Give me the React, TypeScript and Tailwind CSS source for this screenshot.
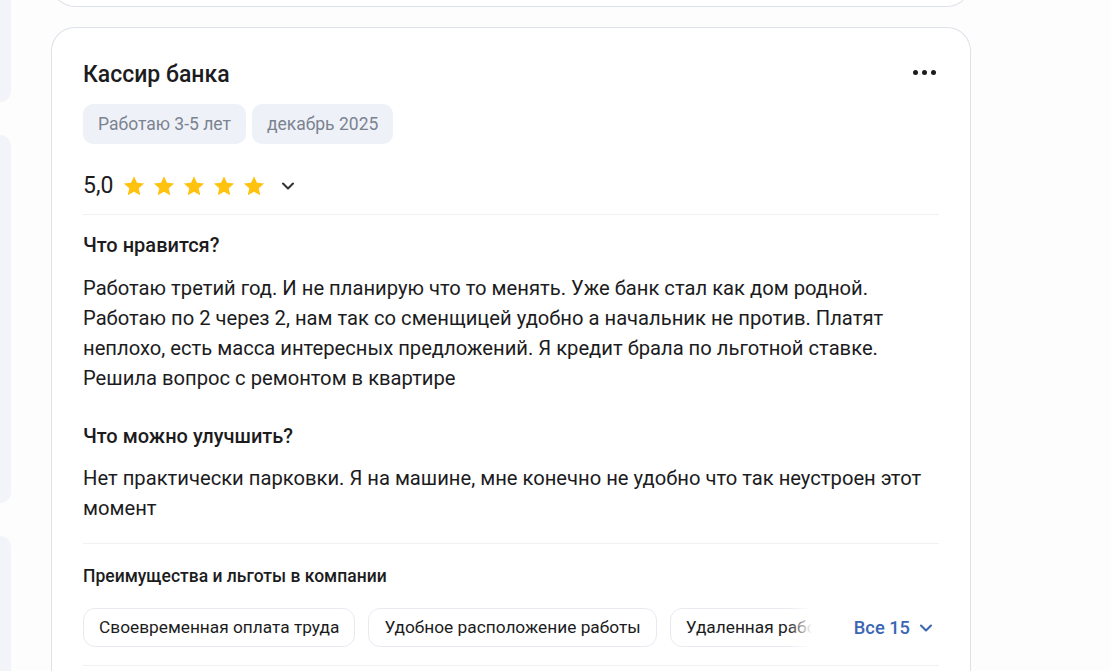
import { ChevronDown } from 'lucide-react'

const font = { fontFamily: 'Roboto, "Noto Sans", sans-serif' }

function Star() {
  return (
    <svg width="24" height="24" viewBox="0 0 24 24" className="shrink-0">
      <path
        d="M12 2.2l2.95 6.55 7.15.72-5.37 4.78 1.52 7.03L12 17.7l-6.25 3.58 1.52-7.03L1.9 9.47l7.15-.72L12 2.2z"
        fill="#ffc20e"
      />
    </svg>
  )
}

const benefits = ['Своевременная оплата труда', 'Удобное расположение работы', 'Удаленная работа', 'ДМС']

export default function App() {
  return (
    <div className="flex h-[671px] w-[1111px] overflow-hidden bg-[#fdfdfe] text-[#1c1c1e]" style={font}>
      {/* sidebar edge */}
      <div className="flex w-[11px] shrink-0 flex-col gap-[33px]">
        <div className="-mt-[40px] h-[142px] shrink-0 rounded-r-[16px] bg-[#f3f4f9]" />
        <div className="h-[368px] shrink-0 rounded-r-[16px] bg-[#f3f4f9]" />
        <div className="h-[200px] shrink-0 rounded-r-[16px] bg-[#f3f4f9]" />
      </div>

      <div className="ml-[40px] flex w-[920px] shrink-0 flex-col">
        {/* previous card tail */}
        <div className="-mt-[24px] h-[31px] shrink-0 rounded-b-[24px] border border-t-0 border-[#dde1e8] bg-white" />

        <div className="mt-[20px] shrink-0 rounded-t-[24px] border border-b-0 border-[#dde1e8] bg-white px-[31px] pt-[32px] pb-10">
          <div className="flex items-center justify-between">
            <h2 className="text-[23px] font-medium leading-[30px]">Кассир банка</h2>
            <div className="mr-[3px] mb-[6px] flex gap-[4px]">
              <span className="h-[5px] w-[5px] rounded-full bg-[#1c1c1e]" />
              <span className="h-[5px] w-[5px] rounded-full bg-[#1c1c1e]" />
              <span className="h-[5px] w-[5px] rounded-full bg-[#1c1c1e]" />
            </div>
          </div>

          <div className="mt-[14px] flex gap-[6px]">
            <span className="flex h-[40px] items-center rounded-[10px] bg-[#eef1f7] px-[15px] text-[17.5px] text-[#7b8391]">
              Работаю 3-5 лет
            </span>
            <span className="flex h-[40px] items-center rounded-[10px] bg-[#eef1f7] px-[15px] text-[17.5px] text-[#7b8391]">
              декабрь 2025
            </span>
          </div>

          <div className="mt-[27px] flex h-[30px] items-center">
            <span className="text-[23px] leading-[30px]">5,0</span>
            <div className="ml-[9px] flex gap-[6px]">
              <Star />
              <Star />
              <Star />
              <Star />
              <Star />
            </div>
            <ChevronDown className="ml-[12px] h-[20px] w-[20px] text-[#333]" strokeWidth={2.5} />
          </div>

          <div className="mt-[13px] h-px bg-[#f0f1f5]" />

          <h3 className="mt-[17px] text-[20px] font-medium leading-[26px]">Что нравится?</h3>
          <p className="mt-[15px] text-[20.2px] leading-[30px]">
            Работаю третий год. И не планирую что то менять. Уже банк стал как дом родной. Работаю по 2 через 2, нам так
            со сменщицей удобно а начальник не против. Платят неплохо, есть масса интересных предложений. Я кредит брала
            по льготной ставке. Решила вопрос с ремонтом в квартире
          </p>

          <h3 className="mt-[30px] text-[20px] font-medium leading-[26px]">Что можно улучшить?</h3>
          <p className="mt-[14px] text-[20.2px] leading-[30px]">
            Нет практически парковки. Я на машине, мне конечно не удобно что так неустроен этот момент
          </p>

          <div className="mt-[20px] h-px bg-[#f0f1f5]" />

          <h3 className="mt-[20px] text-[17.5px] font-medium leading-[24px]">Преимущества и льготы в компании</h3>

          <div className="mt-[20px] flex items-center">
            <div className="relative min-w-0 flex-1 overflow-hidden">
              <div className="flex gap-[13px]">
                {benefits.map((b) => (
                  <span
                    key={b}
                    className="flex h-[39px] shrink-0 items-center whitespace-nowrap rounded-[12px] border border-[#e8eaf0] px-[15px] text-[17.3px]"
                  >
                    {b}
                  </span>
                ))}
              </div>
              <div className="pointer-events-none absolute inset-y-0 right-0 w-[24px] bg-gradient-to-r from-white/0 to-white" />
            </div>
            <button className="ml-[42px] mr-[3px] flex shrink-0 items-center gap-[6px] text-[18.3px] font-medium text-[#3b66b2]">
              Все 15
              <ChevronDown className="h-[20px] w-[20px]" strokeWidth={2.5} />
            </button>
          </div>

          <div className="mt-[18px] h-px bg-[#f0f1f5]" />
        </div>
      </div>
    </div>
  )
}
